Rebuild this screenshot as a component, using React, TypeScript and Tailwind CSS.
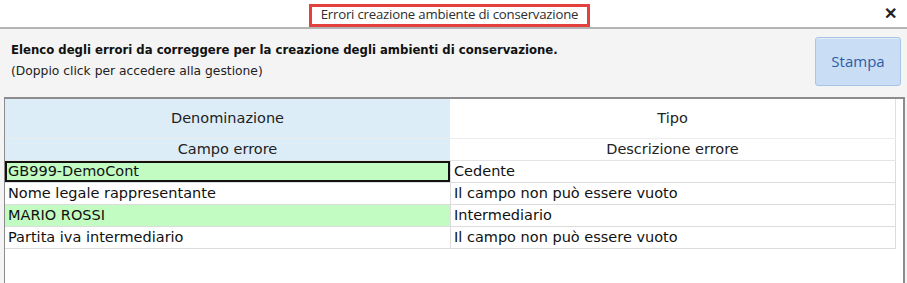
import React from "react";

const rows = [
  { a: "GB999-DemoCont", b: "Cedente", green: true, selected: true },
  { a: "Nome legale rappresentante", b: "Il campo non può essere vuoto", green: false, selected: false },
  { a: "MARIO ROSSI", b: "Intermediario", green: true, selected: false },
  { a: "Partita iva intermediario", b: "Il campo non può essere vuoto", green: false, selected: false },
];

export default function App() {
  return (
    <div
      className="w-[907px] h-[283px] bg-[#f4f4f4] flex flex-col overflow-hidden"
      style={{ fontFamily: '"DejaVu Sans", Verdana, sans-serif' }}
    >
      {/* Title bar */}
      <div className="relative h-[29px] bg-white border-b-2 border-[#b4b4b4] flex items-center justify-center shrink-0">
        <div className="ml-[-8px] mt-[3px] h-[23px] w-[281px] border-[3px] border-[#e2413d] bg-white flex items-center justify-center">
          <span
            className="text-[13.2px] text-[#2e2e2e] leading-none"
            style={{ fontFamily: '"Open Sans", "Noto Sans", sans-serif', letterSpacing: "-0.2px" }}
          >
            Errori creazione ambiente di conservazione
          </span>
        </div>
        <span
          className="absolute right-[10px] top-[6px] text-[16px] font-bold text-[#222] leading-none"
          style={{ fontFamily: '"Liberation Sans", Arial, sans-serif' }}
        >
          ✕
        </span>
      </div>

      {/* Header area */}
      <div className="flex h-[68px] shrink-0">
        <div className="flex-1 pl-[11px] pt-[13px]">
          <div className="text-[11.7px] font-bold text-[#111] leading-[17px]">
            Elenco degli errori da correggere per la creazione degli ambienti di conservazione.
          </div>
          <div className="text-[12.3px] text-[#222] leading-[16px] mt-[4px]">
            (Doppio click per accedere alla gestione)
          </div>
        </div>
        <div className="pt-[8px] pr-[6px]">
          <div className="w-[86px] h-[49px] rounded-[3px] border border-[#a8c3e6] bg-[#c9ddf5] flex items-center justify-center shadow-[inset_0_1px_0_#e2edfa]">
            <span
              className="text-[15px] text-[#2c5ea6]"
              style={{ fontFamily: '"Open Sans", "Noto Sans", sans-serif' }}
            >
              Stampa
            </span>
          </div>
        </div>
      </div>

      {/* Grid */}
      <div className="ml-[4px] w-[901px] flex-1 bg-white border-t-2 border-l border-r-2 border-[#8c8c8c] pr-[7px]">
        <div className="text-[14.5px] text-[#111]">
          {/* header row 1 */}
          <div className="flex h-[40px] border-b border-[#ececec]">
            <div className="w-[445px] bg-[#ddedf8] flex items-center justify-center text-[#222] pt-[1px]">Denominazione</div>
            <div className="flex-1 flex items-center justify-center border-r border-[#e0e0e0] text-[#222] pt-[1px]">Tipo</div>
          </div>
          {/* header row 2 */}
          <div className="flex h-[22px] border-b border-[#e4e4e4]">
            <div className="w-[445px] bg-[#ddedf8] flex items-center justify-center text-[#222]">Campo errore</div>
            <div className="flex-1 flex items-center justify-center border-r border-[#e0e0e0] text-[#222]">Descrizione errore</div>
          </div>
          {rows.map((r, i) => (
            <div key={i} className="flex h-[22px] border-b border-[#dcdcdc] leading-none">
              <div
                className={
                  "w-[445px] flex items-center whitespace-nowrap " +
                  (r.green ? "bg-[#c2fcc2] " : "bg-white ") +
                  (r.selected ? "border-2 border-[#111] pl-[1px]" : "pl-[3px]")
                }
              >
                {r.a}
              </div>
              <div className="flex-1 flex items-center pl-[3px] border-l border-r border-[#dcdcdc] whitespace-nowrap">
                {r.b}
              </div>
            </div>
          ))}
        </div>
      </div>
    </div>
  );
}
